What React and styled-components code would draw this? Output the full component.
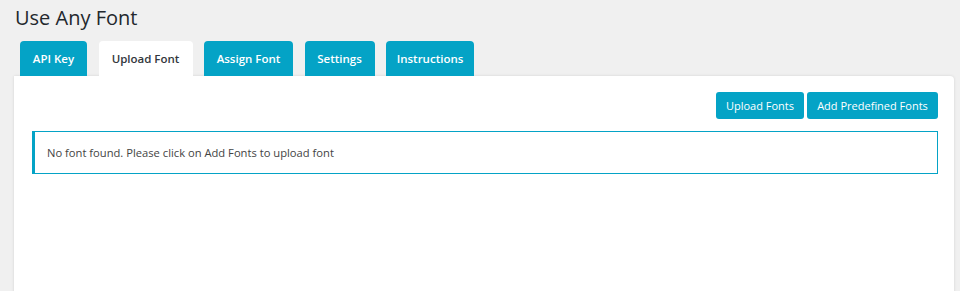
import React from "react";
import styled, { createGlobalStyle } from "styled-components";

const Global = createGlobalStyle`
  html, body {
    margin: 0;
    padding: 0;
    background: #f0f0f0;
    font-family: "Open Sans", "Noto Sans", sans-serif;
  }
`;

const Wrap = styled.div`
  padding: 5px 6px 0 14px;
  height: 291px;
  box-sizing: border-box;
  overflow: hidden;
`;

const Title = styled.h1`
  margin: 0 0 0 1px;
  font-size: 20px;
  font-weight: 400;
  line-height: 26px;
  color: #23282d;
`;

const Tabs = styled.div`
  display: flex;
  gap: 11.5px;
  margin: 10px 0 0 6px;
  height: 35px;
`;

const Tab = styled.div`
  display: flex;
  align-items: center;
  justify-content: center;
  width: ${(p) => p.w}px;
  border-radius: 4px 4px 0 0;
  font-size: 11.5px;
  font-weight: 600;
  white-space: nowrap;
  background: ${(p) => (p.active ? "#fff" : "#04a3c6")};
  color: ${(p) => (p.active ? "#32373c" : "#fff")};
`;

const Panel = styled.div`
  background: #fff;
  border-radius: 0 4px 0 0;
  box-shadow: 0 0 3px rgba(0, 0, 0, 0.12);
  padding: 16px 16px 0 18px;
  height: 220px;
`;

const Actions = styled.div`
  display: flex;
  justify-content: flex-end;
  gap: 3px;
`;

const Button = styled.button`
  width: ${(p) => p.w}px;
  height: 27px;
  padding: 0;
  border: none;
  border-radius: 3px;
  background: #04a3c6;
  color: #fff;
  font-family: inherit;
  font-size: 11px;
  font-weight: 500;
  white-space: nowrap;
`;

const Notice = styled.div`
  margin-top: 12px;
  height: 43px;
  box-sizing: border-box;
  border: 1px solid #04a3c6;
  border-left-width: 3px;
  display: flex;
  align-items: center;
  padding-left: 12px;
  font-size: 11.2px;
  color: #444;
`;

const tabs = [
  { label: "API Key", w: 67 },
  { label: "Upload Font", w: 94, active: true },
  { label: "Assign Font", w: 89 },
  { label: "Settings", w: 70 },
  { label: "Instructions", w: 88 },
];

export default function App() {
  return (
    <>
      <Global />
      <Wrap>
        <Title>Use Any Font</Title>
        <Tabs>
          {tabs.map((t) => (
            <Tab key={t.label} w={t.w} active={t.active}>
              {t.label}
            </Tab>
          ))}
        </Tabs>
        <Panel>
          <Actions>
            <Button w={88}>Upload Fonts</Button>
            <Button w={131}>Add Predefined Fonts</Button>
          </Actions>
          <Notice>No font found. Please click on Add Fonts to upload font</Notice>
        </Panel>
      </Wrap>
    </>
  );
}
